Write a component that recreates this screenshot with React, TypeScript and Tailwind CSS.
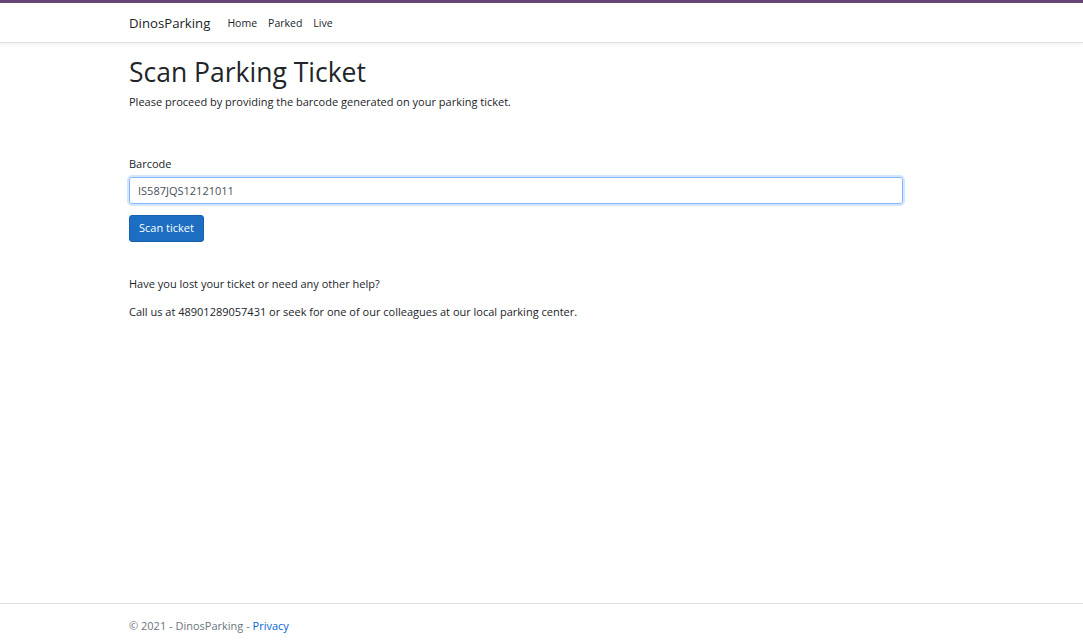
import React, { useState } from 'react'

const font = { fontFamily: '"Open Sans", "Noto Sans", Arial, sans-serif' }

function NavBar() {
  return (
    <header className="border-t-[3px] border-[#654674] border-b border-b-[#e0e0e0] bg-white shadow-[0_2px_4px_rgba(0,0,0,0.05)]">
      <nav className="flex h-[39px] items-center pl-[129px] pt-[2px]">
        <a href="#" className="text-[13.2px] text-[#212529] mr-[17px]">DinosParking</a>
        <ul className="flex items-center gap-[11px] text-[10.5px] text-[#212529]">
          <li><a href="#">Home</a></li>
          <li><a href="#">Parked</a></li>
          <li><a href="#">Live</a></li>
        </ul>
      </nav>
    </header>
  )
}

export default function App() {
  const [barcode, setBarcode] = useState('IS587JQS12121011')

  return (
    <div style={font} className="flex min-h-[643px] flex-col bg-white text-[#212529]">
      <NavBar />
      <main className="flex-1 pl-[129px] pt-[13px]">
        <h1 className="text-[26.5px] leading-[33px] font-normal">Scan Parking Ticket</h1>
        <p className="mt-[5px] text-[11px] leading-[16px]">
          Please proceed by providing the barcode generated on your parking ticket.
        </p>

        <form className="mt-[46px] w-[774px]" onSubmit={e => e.preventDefault()}>
          <label className="block text-[11px] leading-[16px]">Barcode</label>
          <input
            autoFocus
            value={barcode}
            onChange={e => setBarcode(e.target.value)}
            className="mt-[5px] block h-[27px] w-full rounded-[3px] border border-[#86b7fe] px-[8px] text-[11px] text-[#495057] outline-none shadow-[0_0_0_2px_rgba(13,110,253,0.18)]"
          />
          <button
            type="submit"
            className="mt-[11px] h-[27px] rounded-[3px] border border-[#1861ac] bg-[#1b6ec2] px-[9px] text-[11px] text-white"
          >
            Scan ticket
          </button>
        </form>

        <p className="mt-[34px] text-[11px] leading-[16px]">Have you lost your ticket or need any other help?</p>
        <p className="mt-[12px] text-[11px] leading-[16px]">
          Call us at 48901289057431 or seek for one of our colleagues at our local parking center.
        </p>
      </main>
      <footer className="h-[40px] border-t border-[#dee2e6] pl-[129px] pt-[14px] text-[11px] text-[#6c757d]">
        © 2021 - DinosParking - <a href="#" className="text-[#0366d6]">Privacy</a>
      </footer>
    </div>
  )
}
